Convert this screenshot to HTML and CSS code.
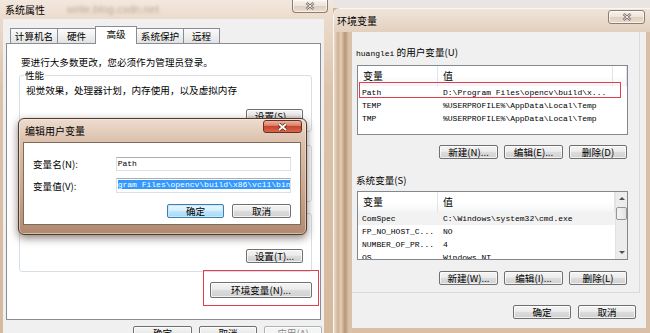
FILE: index.html
```html
<!DOCTYPE html>
<html lang="zh-CN">
<head>
<meta charset="UTF-8">
<title>环境变量</title>
<link rel="stylesheet" href="styles.css">
</head>
<body>
<div class="desk">

  <section class="win sys">
    <div class="title">
      <span class="caption">系统属性</span>
      <span class="watermark">write.blog.csdn.net</span>
      <span class="close close-light">
        <svg width="10" height="8" viewBox="0 0 10 8"><path d="M1.5 1 L8.5 7 M8.5 1 L1.5 7" stroke="#7b726c" stroke-width="2.6"/><path d="M1.5 1 L8.5 7 M8.5 1 L1.5 7" stroke="#f3efeb" stroke-width="1"/></svg>
      </span>
    </div>
    <div class="client">
      <div class="tabs">
        <span class="tab">计算机名</span>
        <span class="tab">硬件</span>
        <span class="tab active">高级</span>
        <span class="tab">系统保护</span>
        <span class="tab last">远程</span>
      </div>
      <div class="page">
        <p class="note">要进行大多数更改，您必须作为管理员登录。</p>
        <fieldset class="group">
          <legend>性能</legend>
          <p class="desc">视觉效果，处理器计划，内存使用，以及虚拟内存</p>
          <div class="btn-row"><button class="btn set">设置(S)...</button></div>
        </fieldset>
        <fieldset class="group">
          <legend>用户配置文件</legend>
          <p class="desc">与登录有关的桌面设置</p>
          <div class="btn-row"><button class="btn set">设置(E)...</button></div>
        </fieldset>
        <fieldset class="group startup">
          <legend>启动和故障恢复</legend>
          <p class="desc">系统启动、系统失败和调试信息</p>
          <div class="btn-row"><button class="btn set">设置(T)...</button></div>
        </fieldset>
        <div class="btn-row env-row"><button class="btn wide">环境变量(N)...</button></div>
      </div>
      <div class="dlg-buttons">
        <button class="btn">确定</button>
        <button class="btn">取消</button>
        <button class="btn" disabled>应用(A)</button>
      </div>
    </div>
  </section>

  <section class="win env">
    <div class="title">
      <span class="caption">环境变量</span>
      <span class="close close-light">
        <svg width="10" height="8" viewBox="0 0 10 8"><path d="M1.5 1 L8.5 7 M8.5 1 L1.5 7" stroke="#7b726c" stroke-width="2.6"/><path d="M1.5 1 L8.5 7 M8.5 1 L1.5 7" stroke="#f3efeb" stroke-width="1"/></svg>
      </span>
    </div>
    <div class="env-body">
      <div class="client">
        <div class="vars">
          <div class="label"><span class="en">huanglei</span> 的用户变量(U)</div>
          <div class="list user">
            <div class="cols">
              <div class="head"><span>变量</span><span>值</span><span></span></div>
              <div class="row"><span>Path</span><span>D:\Program Files\opencv\build\x...</span></div>
              <div class="row"><span>TEMP</span><span>%USERPROFILE%\AppData\Local\Temp</span></div>
              <div class="row"><span>TMP</span><span>%USERPROFILE%\AppData\Local\Temp</span></div>
            </div>
          </div>
          <div class="list-buttons">
            <button class="btn">新建(N)...</button>
            <button class="btn">编辑(E)...</button>
            <button class="btn">删除(D)</button>
          </div>

          <div class="label second">系统变量(S)</div>
          <div class="list system">
            <div class="cols">
              <div class="head"><span>变量</span><span>值</span></div>
              <div class="row hover"><span>ComSpec</span><span>C:\Windows\system32\cmd.exe</span></div>
              <div class="row"><span>FP_NO_HOST_C...</span><span>NO</span></div>
              <div class="row"><span>NUMBER_OF_PR...</span><span>4</span></div>
              <div class="row"><span>OS</span><span>Windows_NT</span></div>
            </div>
            <div class="scroll">
              <span class="arrow up"></span>
              <span class="thumb"></span>
              <span class="arrow down"></span>
            </div>
          </div>
          <div class="list-buttons">
            <button class="btn">新建(W)...</button>
            <button class="btn">编辑(I)...</button>
            <button class="btn">删除(L)</button>
          </div>
        </div>
        <div class="dlg-buttons">
          <button class="btn">确定</button>
          <button class="btn">取消</button>
        </div>
      </div>
    </div>
  </section>

  <section class="win edit">
    <div class="title">
      <span class="caption">编辑用户变量</span>
      <span class="close close-red">
        <svg width="11" height="8" viewBox="0 0 11 8"><path d="M2 1 L9 7 M9 1 L2 7" stroke="#5c1e14" stroke-width="3.2"/><path d="M2 1 L9 7 M9 1 L2 7" stroke="#ffffff" stroke-width="1.8"/></svg>
      </span>
    </div>
    <div class="client">
      <div class="field">
        <label>变量名(N):</label>
        <div class="input">Path</div>
      </div>
      <div class="field">
        <label>变量值(V):</label>
        <div class="input"><span class="sel">gram Files\opencv\build\x86\vc11\bin</span></div>
      </div>
      <div class="buttons">
        <button class="btn default">确定</button>
        <button class="btn">取消</button>
      </div>
    </div>
  </section>

  <div class="mark mark-env"></div>
  <div class="mark mark-path"></div>
</div>
</body>
</html>
```

FILE: styles.css
```css
* {
  box-sizing: border-box;
}

html, body {
  margin: 0;
  padding: 0;
}

body {
  width: 650px;
  height: 333px;
  overflow: hidden;
  font-family: "Noto Sans CJK SC", "Liberation Sans", sans-serif;
  font-size: 9.6px;
  color: #000;
}

.desk {
  position: relative;
  width: 650px;
  height: 333px;
  overflow: hidden;
  background: linear-gradient(#e8e5e2 0 8px, #cfb295 8px);
}

p {
  margin: 0;
}

/* windows */

.win {
  position: absolute;
  display: flex;
  flex-direction: column;
}

.title {
  display: flex;
  align-items: flex-start;
  flex: none;
}

.caption {
  font-size: 10px;
  color: #000;
  white-space: nowrap;
}

.close {
  display: flex;
  align-items: center;
  justify-content: center;
  margin-left: auto;
  flex: none;
}

.close-light {
  border: 1px solid #8d7d70;
  background: linear-gradient(#f8f3ee, #ede3d9 50%, #dfcfc0 51%, #e9dccf);
  box-shadow: inset 0 0 0 1px rgba(255, 255, 255, 0.6);
}

.close-red {
  border: 1px solid #6d2c20;
  border-radius: 3px;
  background: linear-gradient(#ebb3a4, #d97a64 45%, #c3462d 50%, #d8664b);
}

.btn {
  font: inherit;
  height: 14px;
  padding: 0;
  line-height: 12px;
  border: 1px solid #707070;
  border-radius: 2px;
  background: linear-gradient(#f4f4f4, #ececec 45%, #dddddd 50%, #d0d0d0);
  box-shadow: inset 0 0 0 1px rgba(255, 255, 255, 0.7);
  color: #000;
  white-space: nowrap;
}

.btn:disabled {
  border-color: #adb2b5;
  background: #f4f4f4;
  color: #8a8a8a;
}

.btn.default {
  border-color: #3c7fb1;
  background: linear-gradient(#eaf6fd, #d9f0fc 45%, #bee6fd 50%, #a7d9f5);
  box-shadow: inset 0 0 0 1px #c9e9fb;
}

.dlg-buttons {
  display: flex;
  justify-content: flex-end;
  gap: 7px;
  flex: none;
}

.dlg-buttons .btn {
  width: 58px;
}

/* 系统属性 */

.sys {
  left: 0;
  top: 0;
  width: 333px;
  height: 346px;
  padding: 0 9px 0 3px;
  background: linear-gradient(#f3e8de, #ebdacb 20px, #dcc3ab 90px, #d5b99d);
}

.sys .title {
  height: 19px;
}

.sys .caption {
  line-height: 19px;
  padding-left: 2px;
}

.watermark {
  margin-left: 22px;
  line-height: 19px;
  font-family: "Liberation Sans", sans-serif;
  font-size: 11px;
  color: rgba(110, 90, 80, 0.4);
  filter: blur(1.4px);
}

.sys .close {
  width: 36px;
  height: 13px;
  margin-right: -4px;
  border-top: none;
  border-radius: 0 0 4px 4px;
}

.sys .client {
  flex: 1;
  display: flex;
  flex-direction: column;
  background: #f0f0f0;
}

.tabs {
  display: flex;
  align-items: flex-end;
  height: 24px;
  padding-left: 7px;
  flex: none;
}

.tab {
  height: 15px;
  line-height: 14px;
  text-align: center;
  border: 1px solid #898c95;
  border-bottom: none;
  border-right: none;
  background: linear-gradient(#fbfbfb, #efefef 50%, #e2e2e2);
}

.tab:nth-child(1) { width: 47px; }
.tab:nth-child(2) { width: 38px; }
.tab:nth-child(3) { width: 42px; }
.tab:nth-child(4) { width: 46px; }
.tab:nth-child(5) { width: 37px; }

.tab.active {
  position: relative;
  z-index: 1;
  height: 18px;
  margin-bottom: -1px;
  line-height: 15px;
  background: #fff;
  border-right: 1px solid #898c95;
}

.tab.active + .tab {
  border-left: none;
}

.tab.last {
  border-right: 1px solid #898c95;
}

.page {
  flex: none;
  height: 277px;
  margin: 0 3px;
  border: 1px solid #898c95;
  background: #fff;
}

.note {
  margin: 12px 0 0 14px;
  line-height: 12px;
}

.group {
  margin: 0 8px 0 12px;
  padding: 0 8px 8px 6px;
  border: 1px solid #d5dfe5;
  border-radius: 3px;
  min-width: 0;
}

.group + .group {
  margin-top: 6px;
}

.group.startup {
  margin-top: 4px;
}

.group legend {
  padding: 0 1px;
  margin-left: -2px;
  line-height: 14px;
}

.desc {
  margin-top: 2px;
  line-height: 12px;
}

.btn-row {
  display: flex;
  justify-content: flex-end;
  margin-top: 13px;
}

.startup .btn-row {
  margin-top: 15px;
}

.btn.set {
  width: 57px;
}

.env-row {
  margin: 10px 8px 0 0;
}

.btn.wide {
  width: 102px;
  height: 16px;
  line-height: 14px;
}

.sys .dlg-buttons {
  margin-top: 6px;
  padding-right: 2px;
}

.sys .dlg-buttons .btn:first-child {
  width: 59px;
}

/* 编辑用户变量 */

.edit {
  z-index: 3;
  left: 18px;
  top: 118px;
  width: 289px;
  height: 117px;
  padding: 0 5px 9px 4px;
  border: 1px solid #4e3c31;
  border-radius: 6px;
  background: linear-gradient(#eddcd0, #dcc1ad 22px, #cba98f 60%, #b08970);
  box-shadow: 0 3px 9px rgba(40, 20, 10, 0.55), inset 0 0 0 1px rgba(255, 240, 225, 0.5);
}

.edit .title {
  height: 23px;
}

.edit .caption {
  line-height: 23px;
  padding-left: 2px;
}

.edit .close {
  width: 39px;
  height: 13px;
  margin: 1px -1px 0 auto;
}

.edit .client {
  flex: 1;
  padding: 14px 9px 0;
  border: 1px solid #7f6b5d;
  background: #fff;
}

.field {
  display: flex;
  align-items: center;
  height: 14px;
}

.field + .field {
  height: 15px;
  margin-top: 7px;
}

.field label {
  width: 83px;
  line-height: 12px;
}

.input {
  width: 176px;
  height: 100%;
  padding-left: 1px;
  border: 1px solid #dbdfe6;
  border-top-color: #abadb3;
  background: #fff;
  font-family: "Liberation Mono", monospace;
  font-size: 8px;
  line-height: 12px;
  white-space: nowrap;
  overflow: hidden;
}

.sel {
  background: #3399ff;
  color: #fff;
}

.edit .buttons {
  display: flex;
  justify-content: flex-end;
  gap: 8px;
  margin-top: 11px;
}

.edit .buttons .btn {
  width: 59px;
}

.edit .buttons .btn.default {
  width: 57px;
}

/* 环境变量 */

.env {
  left: 333px;
  top: 8px;
  width: 317px;
  height: 330px;
  border-top: 1px solid #fbf6f1;
  border-left: 1px solid #fbf6f1;
  border-radius: 7px 0 0 0;
  background: linear-gradient(90deg, #eadccd 0, #cfb095 4px, #e3cdb7 7px, #b89477 11px, #dbc2aa 15px, #d9bfa5 19px);
}

.env .title {
  height: 23px;
  padding-left: 3px;
  background: linear-gradient(#f0e5db, #e3d0be);
  border-radius: 6px 0 0 0;
}

.env .caption {
  line-height: 24px;
}

.env .close {
  width: 37px;
  height: 14px;
  margin: 1px 5px 0 auto;
  border-radius: 3px;
}

.env-body {
  flex: 1;
  padding: 0 4px 0 18px;
}

.env .client {
  height: 296px;
  display: flex;
  flex-direction: column;
  background: #f0f0f0;
}

.vars {
  height: 261px;
  width: 288px;
  padding-left: 4px;
  border-right: 1px solid #dadada;
  border-bottom: 1px solid #dadada;
}

.vars .label {
  margin-top: 14px;
  line-height: 12px;
}

.vars .label.second {
  margin-top: 15px;
}

.en {
  font-family: "Liberation Mono", monospace;
  font-size: 8px;
}

.list {
  display: flex;
  width: 271px;
  margin: 5px 0 0 1px;
  border: 1px solid #828790;
  background: #fff;
  overflow: hidden;
}

.list.user {
  height: 70px;
}

.list.system {
  height: 69px;
}

.cols {
  flex: 1;
  min-width: 0;
}

.head {
  display: grid;
  grid-template-columns: 80px 175px 1fr;
  height: 20px;
  line-height: 20px;
  font-size: 10px;
  background: linear-gradient(#fff 50%, #f4f5f7);
}

.system .head {
  grid-template-columns: 80px 1fr;
}

.head span {
  padding-left: 5px;
  border-right: 1px solid #e3e4e8;
}

.row {
  display: grid;
  grid-template-columns: 80px 1fr;
  height: 13px;
  line-height: 13px;
  font-family: "Liberation Mono", monospace;
  font-size: 8px;
  white-space: nowrap;
}

.row span:first-child {
  padding-left: 4px;
}

.row span + span {
  padding-left: 5px;
}

.row.hover {
  background: #f2f2f2;
}

.scroll {
  flex: none;
  width: 12px;
  display: flex;
  flex-direction: column;
  background: #ececec;
  border-left: 1px solid #e2e2e2;
}

.arrow {
  height: 13px;
  display: flex;
  align-items: center;
  justify-content: center;
}

.arrow.up::before {
  content: "";
  border: 3px solid transparent;
  border-top: none;
  border-bottom: 3px solid #505050;
}

.arrow.down {
  margin-top: auto;
}

.arrow.down::before {
  content: "";
  border: 3px solid transparent;
  border-bottom: none;
  border-top: 3px solid #505050;
}

.thumb {
  height: 13px;
  margin-top: 2px;
  border: 1px solid #959595;
  border-radius: 2px;
  background: linear-gradient(90deg, #f5f5f5, #e2e2e2);
}

.list-buttons {
  display: flex;
  justify-content: flex-end;
  gap: 6px;
  width: 272px;
  margin-top: 10px;
  padding-right: 1px;
}

.list-buttons + .label + .list + .list-buttons {
  margin-top: 11px;
}

.list-buttons .btn {
  width: 59px;
}

.list-buttons .btn:last-child {
  width: 58px;
}

.env .dlg-buttons {
  margin-top: 12px;
  padding-right: 10px;
}

/* red highlight boxes */

.mark {
  position: absolute;
  z-index: 5;
  border: 1px solid #e43d4c;
}

.mark-env {
  left: 203px;
  top: 270px;
  width: 116px;
  height: 36px;
}

.mark-path {
  left: 359px;
  top: 82px;
  width: 262px;
  height: 16px;
}
```
